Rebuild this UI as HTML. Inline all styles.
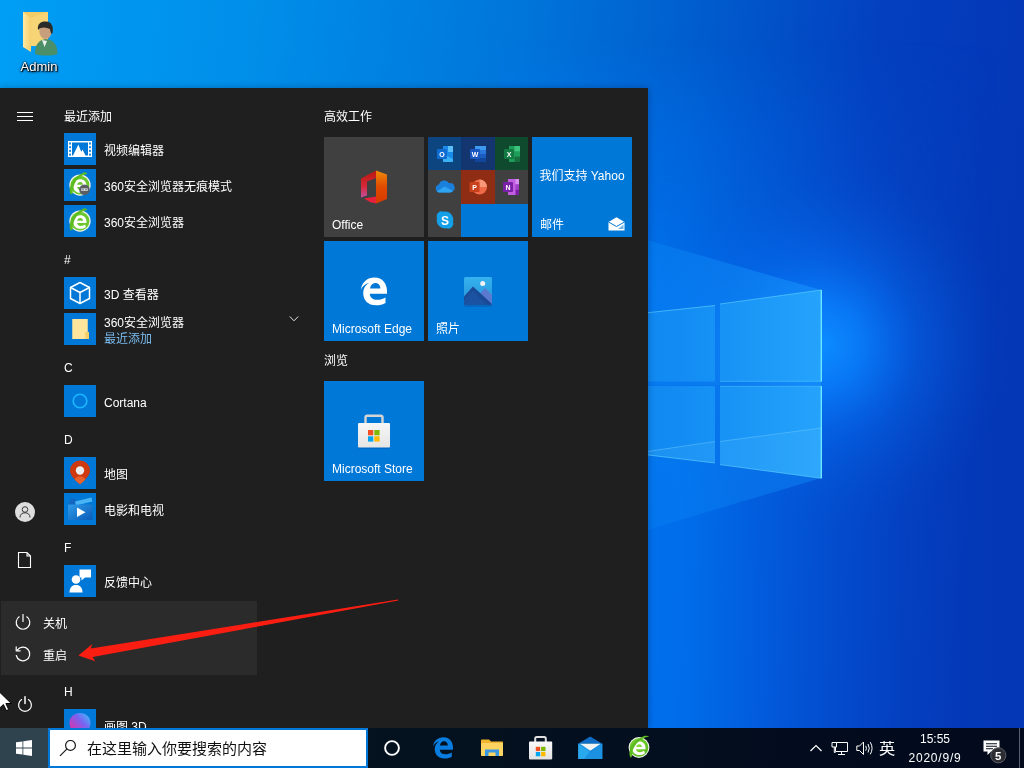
<!DOCTYPE html>
<html lang="zh-CN">
<head>
<meta charset="utf-8">
<title>Windows 10 开始菜单</title>
<style>
*{box-sizing:border-box;margin:0;padding:0}
html,body{width:1024px;height:768px;overflow:hidden;background:#0a5fd0}
body{position:relative;font-family:"Liberation Sans","Noto Sans CJK SC",sans-serif;font-size:12px;color:#fff;-webkit-font-smoothing:antialiased}
.abs{position:absolute}
#wall{position:absolute;left:0;top:0;width:1024px;height:768px}
/* desktop icon */
#dicon{position:absolute;left:0;top:0;width:76px;height:84px}
#dicon .lbl{position:absolute;left:1px;top:59px;width:76px;text-align:center;font-size:13px;line-height:16px;color:#fff;text-shadow:1px 1px 1px #000,0 0 2px #000,0 1px 3px rgba(0,0,0,.8)}
/* start menu */
#start{position:absolute;left:0;top:88px;width:648px;height:640px;background:#1f1f1f;overflow:hidden;box-shadow:0 0 7px rgba(0,10,40,.3)}
.hdr{position:absolute;left:64px;height:36px;line-height:38px;font-size:12px;color:#fff;white-space:nowrap}
.row{position:absolute;left:64px;height:36px;width:250px;white-space:nowrap}
.row .ic{position:absolute;left:0;top:0;width:32px;height:32px;background:#0078d7;overflow:hidden}
.row .ic svg{position:absolute;left:0;top:0;width:32px;height:32px;display:block}
.row .tx{position:absolute;left:40px;top:2px;height:32px;line-height:32px;font-size:12px;color:#fff}
.row .tx2{position:absolute;left:40px;top:2px;line-height:16px;font-size:12px;color:#fff}
.row .tx2 span{display:block;color:#79bbee}
/* tiles */
.ghdr{position:absolute;left:324px;font-size:12px;line-height:16px;color:#fff;white-space:nowrap}
.tile{position:absolute;width:100px;height:100px;background:#0078d7;overflow:hidden}
.tile .tl{position:absolute;left:8px;bottom:4px;font-size:12px;line-height:16px;color:#fff;white-space:nowrap}
.tile svg{position:absolute;display:block}
.cell{position:absolute;overflow:hidden}
/* power popup */
#pop{position:absolute;left:1px;top:601px;width:256px;height:74px;background:#2b2b2b}
#pop .it{position:absolute;left:0;width:256px;height:32px;line-height:32px;font-size:12px;color:#fff}
#pop .it span{position:absolute;left:42px;top:2px}
/* taskbar */
#task{position:absolute;left:0;top:728px;width:1024px;height:40px;background:linear-gradient(90deg,#05141f 0%,#04121f 40%,#030d1e 70%,#020a1c 100%)}
#sbtn{position:absolute;left:0;top:0;width:48px;height:40px;background:#2f434f}
#search{position:absolute;left:48px;top:0;width:320px;height:40px;background:#fff;border:2px solid #0078d7}
#search .st{position:absolute;left:37px;top:0;height:36px;line-height:37px;font-size:15px;color:#111;white-space:nowrap}
.tray{position:absolute;color:#fff;white-space:nowrap}
</style>
</head>
<body>
<div id="all" style="position:absolute;left:0;top:0;width:1024px;height:768px;will-change:transform">
<svg id="wall" viewBox="0 0 1024 768">
<defs>
<linearGradient id="wg" x1="0" y1="0" x2="1024" y2="120" gradientUnits="userSpaceOnUse">
<stop offset="0" stop-color="#009ef5"/>
<stop offset="0.25" stop-color="#008ee9"/>
<stop offset="0.5" stop-color="#0076da"/>
<stop offset="0.68" stop-color="#005ccd"/>
<stop offset="0.85" stop-color="#0340c0"/>
<stop offset="1" stop-color="#0437b6"/>
</linearGradient>
<linearGradient id="hl" x1="560" y1="0" x2="1000" y2="0" gradientUnits="userSpaceOnUse">
<stop offset="0" stop-color="#0078f4" stop-opacity=".95"/>
<stop offset=".3" stop-color="#0070ee" stop-opacity=".85"/>
<stop offset=".6" stop-color="#045ee2" stop-opacity=".5"/>
<stop offset=".8" stop-color="#0450d2" stop-opacity=".25"/>
<stop offset="1" stop-color="#0550c8" stop-opacity="0"/>
</linearGradient>
<linearGradient id="vm" x1="0" y1="40" x2="0" y2="300" gradientUnits="userSpaceOnUse">
<stop offset="0" stop-color="#000"/>
<stop offset=".35" stop-color="#777"/>
<stop offset="1" stop-color="#fff"/>
</linearGradient>
<mask id="vmask"><rect width="1024" height="768" fill="url(#vm)"/></mask>
<radialGradient id="glow" cx="822" cy="345" r="190" gradientUnits="userSpaceOnUse">
<stop offset="0" stop-color="#0c8cff" stop-opacity="1"/>
<stop offset=".22" stop-color="#0a82ff" stop-opacity=".8"/>
<stop offset=".5" stop-color="#0670f2" stop-opacity=".4"/>
<stop offset=".8" stop-color="#0560e0" stop-opacity=".12"/>
<stop offset="1" stop-color="#0550c8" stop-opacity="0"/>
</radialGradient>
<linearGradient id="beamU" x1="821" y1="290" x2="640" y2="240" gradientUnits="userSpaceOnUse">
<stop offset="0" stop-color="#1c9cff" stop-opacity=".5"/>
<stop offset="1" stop-color="#0c8cfa" stop-opacity=".3"/>
</linearGradient>
<linearGradient id="beamD" x1="821" y1="478" x2="640" y2="540" gradientUnits="userSpaceOnUse">
<stop offset="0" stop-color="#1494ff" stop-opacity=".4"/>
<stop offset="1" stop-color="#0a88f6" stop-opacity=".25"/>
</linearGradient>
<linearGradient id="pane" x1="720" y1="0" x2="821" y2="0" gradientUnits="userSpaceOnUse">
<stop offset="0" stop-color="#1792f5"/>
<stop offset="1" stop-color="#25a3fc"/>
</linearGradient>
<linearGradient id="paneL" x1="640" y1="0" x2="715" y2="0" gradientUnits="userSpaceOnUse">
<stop offset="0" stop-color="#0f88f1"/>
<stop offset="1" stop-color="#1691f5"/>
</linearGradient>
</defs>
<rect width="1024" height="768" fill="url(#wg)"/>
<rect x="500" y="0" width="524" height="768" fill="url(#hl)" mask="url(#vmask)"/>
<rect x="600" y="120" width="424" height="460" fill="url(#glow)"/>
<!-- light beams -->
<polygon points="821,290 640,238 640,385 821,385" fill="url(#beamU)"/>
<polygon points="821,478 640,532 640,385 821,385" fill="url(#beamD)"/>
<!-- window panes -->
<polygon points="640,313.500 715,305.500 715,381.500 640,381.500" fill="url(#paneL)"/>
<polygon points="720,304 821.500,290 821.500,381.500 720,381.500" fill="url(#pane)"/>
<polygon points="640,386 715,386 715,463 640,454" fill="url(#paneL)"/>
<polygon points="720,386 821.500,386 821.500,478.300 720,464.600" fill="url(#pane)"/>
<polygon points="720,441.500 821.500,428 821.500,478.300 720,464.600" fill="#6ccaff" opacity=".13"/>
<polygon points="640,452.600 715,441.500 715,463 640,454" fill="#6ccaff" opacity=".13"/>
<path d="M720,441.500L821.500,428M640,452.600L715,441.500" stroke="#7fd4ff" stroke-width=".8" opacity=".5" fill="none"/>
<path d="M720,304L821.500,290M720,464.600L821.500,478.300M640,313.500L715,305.500M640,454L715,463" stroke="#66d8ff" stroke-width=".9" opacity=".65" fill="none"/>
<path d="M821.300,290V381.500M821.300,386V478.300" stroke="#74f0ff" stroke-width="1.300" opacity=".95" fill="none"/>
<path d="M720,381.300H821.500M720,386.200H821.500" stroke="#58c8ff" stroke-width=".8" opacity=".6" fill="none"/>
</svg>
<div id="dicon">
<svg class="abs" style="left:20px;top:10px" width="40" height="46" viewBox="0 0 40 46">
<defs><linearGradient id="fo" x1="0" y1="0" x2="1" y2="0"><stop offset="0" stop-color="#ffe9a6"/><stop offset="1" stop-color="#f6cf6a"/></linearGradient></defs>
<polygon points="3,2 28,2 28,36 11,36 3,30" fill="#f4cc66"/>
<polygon points="3,2 11,8 11,42 3,37" fill="url(#fo)"/>
<polygon points="11,8 28,2 28,36 11,36" fill="#f7d577"/>
<path d="M15 44 C15 34 19 30 26 29 C33 30 37.500 34 37.500 44 C32 46 21 46 15 44Z" fill="#4a8f68"/>
<path d="M22 30 L24.500 37 L27 31Z" fill="#eef1ee"/>
<ellipse cx="25.500" cy="21.500" rx="6.200" ry="7.500" fill="#c79f7d"/>
<path d="M18 20 C17 13 22 11 26 11.500 C31 11.500 34 16 32.500 23 C31 25 30.500 22 30 19 C27 18 22 15.500 18 20Z" fill="#2a2a28"/>
</svg>
<div class="lbl">Admin</div>
</div>
<div id="start"><div id="si" class="abs" style="left:0;top:-88px;width:648px;height:728px">
<svg class="abs" style="left:0;top:88px" width="48" height="640" viewBox="0 88 48 640">
<g stroke="#fff" stroke-width="1" fill="none">
<path d="M17 112.500H33M17 116.500H33M17 120.500H33"/>
</g>
<circle cx="25" cy="512" r="10" fill="#dedede"/>
<g stroke="#3a3a3a" stroke-width="1" fill="none"><circle cx="25" cy="509.500" r="2.800"/><path d="M20 517.500C20 514 22.500 512.800 25 512.800S30 514 30 517.500"/></g>
<path d="M18.500 552.500H27L30.500 556V567.500H18.500ZM27 552.500V556H30.500" stroke="#fff" stroke-width="1.100" fill="none"/>
<g stroke="#fff" stroke-width="1.200" fill="none" stroke-linecap="round"><path d="M25 696.800V703.500" stroke-width="1.500"/><path d="M21.600 699.600A6.400 6.400 0 1 0 28.400 699.600"/></g>
</svg>
<div class="hdr" style="top:98px">最近添加</div>
<div class="row" style="top:133px"><div class="ic"><svg viewBox="0 0 32 32"><rect x="4" y="8" width="24" height="16" fill="#fff"/><path d="M8 9.500h16v13h-2.200l-3-6-1.600 2.300-2.800-7.300-5.400 11H8Z" fill="#0078d7"/><path d="M19 15.500l3 6.500" stroke="#0078d7" stroke-width="1.300"/><g fill="#0078d7"><rect x="5.200" y="9.500" width="1.700" height="2"/><rect x="5.200" y="13.200" width="1.700" height="2"/><rect x="5.200" y="16.900" width="1.700" height="2"/><rect x="5.200" y="20.600" width="1.700" height="2"/><rect x="25.100" y="9.500" width="1.700" height="2"/><rect x="25.100" y="13.200" width="1.700" height="2"/><rect x="25.100" y="16.900" width="1.700" height="2"/><rect x="25.100" y="20.600" width="1.700" height="2"/></g></svg></div><div class="tx">视频编辑器</div></div>
<div class="row" style="top:169px"><div class="ic"><svg viewBox="0 0 32 32"><use href="#i360"/><circle cx="20.500" cy="20.700" r="5.300" fill="#5a5f66"/><path d="M17.300 19.400h6.400v2.500h-6.400z" fill="#e8e8e8"/><circle cx="19" cy="20.700" r=".8" fill="#5a5f66"/><circle cx="22" cy="20.700" r=".8" fill="#5a5f66"/></svg></div><div class="tx">360安全浏览器无痕模式</div></div>
<div class="row" style="top:205px"><div class="ic"><svg viewBox="0 0 32 32"><g id="i360" transform="translate(-.2 -1.200) scale(1.045)"><circle cx="15.500" cy="16.500" r="10.200" fill="#f1f4ee"/><circle cx="15.500" cy="16.500" r="9" fill="#6cc82e"/><path d="M9.200 17.800c0-4.200 2.700-6.800 6.500-6.800 3.600 0 6 2.400 6 6.200v1.200h-9c.3 1.800 1.700 2.800 3.600 2.800 1.600 0 2.800-.5 4-1.400l1 2.300c-1.500 1.200-3.200 1.800-5.300 1.800-4.200 0-6.800-2.500-6.800-6.100Zm3.500-1.500h5.800c-.2-1.700-1.200-2.700-2.800-2.700-1.600 0-2.700 1-3 2.700Z" fill="#fff"/><path d="M6.500 25.500C4 20 7 10 19 4.500c1.500-.6 3 .5 3.500 1.500-8 1-14.500 9-14 18.500Z" fill="#5cbb20"/></g></svg></div><div class="tx">360安全浏览器</div></div>
<div class="hdr" style="top:241px">#</div>
<div class="row" style="top:277px"><div class="ic"><svg viewBox="0 0 32 32"><g stroke="#fff" stroke-width="1.500" fill="none" stroke-linejoin="round"><path d="M16 5.500L25.500 10.500V21.500L16 26.500L6.500 21.500V10.500Z"/><path d="M6.500 10.500L16 15.500L25.500 10.500M16 15.500V26.500"/></g></svg></div><div class="tx">3D 查看器</div></div>
<div class="row" style="top:313px"><div class="ic"><svg viewBox="0 0 32 32"><path d="M8.500 6h15v13l1.500 1.500V26H8.500Z" fill="#fbe08d"/><path d="M8.500 6h15v13h-3.500v7H8.500Z" fill="#fde69c"/><path d="M21.500 19h3.500v7h-3.500z" fill="#f3cd6a"/></svg></div><div class="tx2">360安全浏览器<span>最近添加</span></div><svg class="abs" style="left:225px;top:2px" width="10" height="8" viewBox="0 0 10 8"><path d="M.8 1.500l4.200 4.300 4.200-4.300" stroke="#e6e6e6" stroke-width="1" fill="none"/></svg></div>
<div class="hdr" style="top:349px">C</div>
<div class="row" style="top:385px"><div class="ic"><svg viewBox="0 0 32 32"><circle cx="16" cy="16" r="6.800" stroke="#1cb6ff" stroke-width="1.600" fill="none"/></svg></div><div class="tx">Cortana</div></div>
<div class="hdr" style="top:421px">D</div>
<div class="row" style="top:457px"><div class="ic"><svg viewBox="0 0 32 32"><path d="M16 27.500c-1.500-2.200-10-7.500-10-14a10 10 0 0 1 20 0c0 6.500-8.500 11.800-10 14Z" fill="#d0390f"/><path d="M10.500 22.500c1.500-2.300 3.300-3.300 5.500-3.300s4 1 5.500 3.300c-2 2.300-4.500 4-5.500 5-1-1-3.500-2.700-5.500-5Z" fill="#e8602c"/><circle cx="16" cy="13.500" r="4.200" fill="#ececec"/></svg></div><div class="tx">地图</div></div>
<div class="row" style="top:493px"><div class="ic"><svg viewBox="0 0 32 32"><defs><linearGradient id="mv" x1="0" y1="0" x2="1" y2="1"><stop offset="0" stop-color="#2f9be8"/><stop offset="1" stop-color="#0b5cb8"/></linearGradient></defs><path d="M4 12l3.500-7 5 1.500-2 5.500Z" fill="#1467c0"/><path d="M11 8.500L27.500 4.500l.8 4L12 12.500Z" fill="#49b4f4"/><rect x="4" y="11.500" width="24.500" height="15.500" rx="1" fill="url(#mv)"/><path d="M13 14.500v9.500l8.500-4.750Z" fill="#fff"/></svg></div><div class="tx">电影和电视</div></div>
<div class="hdr" style="top:529px">F</div>
<div class="row" style="top:565px"><div class="ic"><svg viewBox="0 0 32 32"><g fill="#fff"><path d="M15.500 4.500h11.500v8h-6l-3.500 3v-3h-2Z"/><circle cx="12" cy="14.500" r="4.300"/><path d="M5.500 27.500c0-5 2.500-7.500 6.500-7.500s6.500 2.500 6.500 7.500Z"/></g></svg></div><div class="tx">反馈中心</div></div>
<div class="hdr" style="top:673px">H</div>
<div class="row" style="top:709px"><div class="ic"><svg viewBox="0 0 32 32"><defs><linearGradient id="p3" x1="0" y1="1" x2="1" y2="0"><stop offset="0" stop-color="#f0287c"/><stop offset=".3" stop-color="#c040c0"/><stop offset=".6" stop-color="#7a62f0"/><stop offset="1" stop-color="#38c8ff"/></linearGradient></defs><path d="M16 4c6.500 0 10.500 4.500 10.500 10S22 25.500 16 27.500C10 25.500 5.500 19.500 5.500 14S9.500 4 16 4Z" fill="url(#p3)"/></svg></div><div class="tx">画图 3D</div></div>
<div class="ghdr" style="top:109px">高效工作</div>
<div class="tile" style="left:324px;top:137px;background:#404040">
<svg style="left:35px;top:32px" width="30" height="36" viewBox="0 0 30 36"><defs><linearGradient id="of1" x1="0" y1="0" x2="0" y2="1"><stop offset="0" stop-color="#b8160f"/><stop offset=".6" stop-color="#d8283a"/><stop offset="1" stop-color="#c050a0"/></linearGradient><linearGradient id="of2" x1="0" y1="0" x2="0" y2="1"><stop offset="0" stop-color="#f08a08"/><stop offset=".5" stop-color="#e04a00"/><stop offset="1" stop-color="#d83800"/></linearGradient></defs>
<path d="M2 9.500L17 1.500V9L8 12.500V26.500L2 28.500Z" fill="url(#of1)"/><path d="M17 1.500L28 5.500V30L17 34.500Z" fill="url(#of2)"/><path d="M5 29.500L17 27.500V34.500L11 33Z" fill="#e8203c"/></svg>
<div class="tl">Office</div></div>
<div class="tile" style="left:428px;top:137px;background:#404040">
<div class="cell" style="left:0;top:0;width:33px;height:33px;background:#0c4580"><svg style="left:7px;top:7px" width="20" height="20" viewBox="0 0 20 20"><rect x="8" y="2" width="10" height="13" fill="#1a8ae8"/><rect x="13" y="2" width="5" height="6" fill="#5cc0f8"/><path d="M8 10l10 5v3H8z" fill="#39b0f4"/><rect x="2" y="5" width="10" height="10" rx="1" fill="#0f6cd0"/><text x="7" y="13" font-size="7" font-weight="700" fill="#fff" text-anchor="middle" font-family="Liberation Sans,sans-serif">O</text></svg></div>
<div class="cell" style="left:33px;top:0;width:34px;height:33px;background:#143670"><svg style="left:7px;top:7px" width="20" height="20" viewBox="0 0 20 20"><rect x="7" y="2" width="11" height="4" fill="#3d9af0"/><rect x="7" y="6" width="11" height="4" fill="#2a78dc"/><rect x="7" y="10" width="11" height="4" fill="#1a5cc0"/><rect x="7" y="14" width="11" height="4" fill="#12459c"/><rect x="2" y="5" width="10" height="10" rx="1" fill="#1a56c0"/><text x="7" y="13" font-size="7" font-weight="700" fill="#fff" text-anchor="middle" font-family="Liberation Sans,sans-serif">W</text></svg></div>
<div class="cell" style="left:67px;top:0;width:33px;height:33px;background:#104a2e"><svg style="left:7px;top:7px" width="20" height="20" viewBox="0 0 20 20"><rect x="7" y="2" width="11" height="16" fill="#1f9e5a"/><rect x="12.500" y="2" width="5.500" height="5.300" fill="#3dc47c"/><rect x="12.500" y="12.600" width="5.500" height="5.400" fill="#176f40"/><rect x="2" y="5" width="10" height="10" rx="1" fill="#127a42"/><text x="7" y="13" font-size="7" font-weight="700" fill="#fff" text-anchor="middle" font-family="Liberation Sans,sans-serif">X</text></svg></div>
<div class="cell" style="left:0;top:33px;width:33px;height:34px"><svg style="left:6px;top:9px" width="22" height="16" viewBox="0 0 22 16"><path d="M5.500 13.500a4 4 0 0 1-.6-7.900 5.600 5.600 0 0 1 10.300-1.300 4.400 4.400 0 0 1 2.800 8.300c-.7.600-1.500.9-2.400.9Z" fill="#1a80dc"/><path d="M3 12.500l7.500-5 8.500 4.200c-.7 1.100-1.900 1.800-3.400 1.800h-10c-1 0-1.900-.4-2.600-1Z" fill="#2ea4f2"/></svg></div>
<div class="cell" style="left:33px;top:33px;width:34px;height:34px;background:#8e2c14"><svg style="left:7px;top:7px" width="20" height="20" viewBox="0 0 20 20"><circle cx="11.500" cy="10" r="7.500" fill="#ee6a48"/><path d="M11.500 2.500a7.500 7.500 0 0 1 7.500 7.500h-7.500z" fill="#f89878"/><rect x="1.500" y="5" width="10" height="10" rx="1" fill="#c8401c"/><text x="6.500" y="13" font-size="7" font-weight="700" fill="#fff" text-anchor="middle" font-family="Liberation Sans,sans-serif">P</text></svg></div>
<div class="cell" style="left:67px;top:33px;width:33px;height:34px"><svg style="left:6px;top:7px" width="20" height="20" viewBox="0 0 20 20"><rect x="7" y="2" width="11" height="16" fill="#c060e0"/><rect x="14.500" y="2" width="3.500" height="5.300" fill="#d890f0"/><rect x="14.500" y="7.300" width="3.500" height="5.300" fill="#a040c8"/><rect x="14.500" y="12.600" width="3.500" height="5.400" fill="#7a20a8"/><rect x="2" y="5" width="10" height="10" rx="1" fill="#7a1fa8"/><text x="7" y="13" font-size="7" font-weight="700" fill="#fff" text-anchor="middle" font-family="Liberation Sans,sans-serif">N</text></svg></div>
<div class="cell" style="left:0;top:67px;width:33px;height:33px"><svg style="left:7px;top:6px" width="20" height="20" viewBox="0 0 20 20"><path d="M10 1.500a8.300 8.300 0 0 1 8 10.500 5 5 0 0 1-6.500 6.300A8.300 8.300 0 0 1 2 8 5 5 0 0 1 8.500 1.700 8 8 0 0 1 10 1.500Z" fill="#14a0e8"/><text x="10" y="14.500" font-size="12" font-weight="700" fill="#fff" text-anchor="middle" font-family="Liberation Sans,sans-serif">S</text></svg></div>
<div class="cell" style="left:33px;top:67px;width:67px;height:33px;background:#0078d7"></div>
</div>
<div class="tile" style="left:532px;top:137px">
<div class="abs" style="left:0;top:31px;width:100px;text-align:center;font-size:12px;line-height:16px;white-space:nowrap">我们支持 Yahoo</div>
<div class="tl">邮件</div>
<svg style="left:76px;top:80px" width="17" height="14" viewBox="0 0 17 14"><path d="M.5 5L8.500.3 16.500 5V13.500H.5Z" fill="#fff"/><path d="M.5 5l8 4.500 8-4.500" stroke="#0078d7" stroke-width="1" fill="none"/><path d="M10 12l5.500-4.500V12Z" fill="#0078d7" opacity=".55"/></svg>
</div>
<div class="tile" style="left:324px;top:241px">
<svg style="left:36px;top:35px" width="28" height="30" viewBox="0 0 28 30"><path d="M1 13.500C1.800 6 7.500 1.500 14.500 1.500 22.500 1.500 27 7.500 27 15v2.800H9.800c.3 4 3.300 6 7.200 6 3.200 0 6-.9 8.500-2.400v5.600C23 28.500 19.800 29.300 16 29.300 8 29.300 3.200 24.300 3.200 17c0-4.500 2.200-8 5.800-10.200C5.500 7.800 2.600 10 1 13.500Zm9-1h10.300c0-3.300-2-5.500-5-5.500-2.800 0-4.800 2.100-5.300 5.500Z" fill="#fff"/></svg>
<div class="tl">Microsoft Edge</div></div>
<div class="tile" style="left:428px;top:241px">
<svg style="left:35px;top:35px" width="30" height="31" viewBox="0 0 30 31"><defs><linearGradient id="ph" x1="0" y1="0" x2="0" y2="1"><stop offset="0" stop-color="#35b2ee"/><stop offset="1" stop-color="#2590d8"/></linearGradient></defs><rect x="1" y="2" width="28" height="29" rx="1.500" fill="#0a4a98" opacity=".35"/><rect x="1" y="1" width="28" height="28" rx="1.500" fill="url(#ph)"/><path d="M15 20l7-8 7 7v8.500c0 .8-.7 1.500-1.500 1.500H15Z" fill="#5a7ad0"/><path d="M1 20.500L10 10.500 29 28c-.3.600-.8 1-1.500 1H2.500C1.700 29 1 28.300 1 27.500Z" fill="#1a4a96"/><path d="M1 24l9-9 14 14H2.500C1.700 29 1 28.300 1 27.500Z" fill="#1c58a8" opacity=".6"/><circle cx="19.700" cy="7.500" r="2.500" fill="#f2f2f2"/></svg>
<div class="tl">照片</div></div>
<div class="ghdr" style="top:353px">浏览</div>
<div class="tile" style="left:324px;top:381px">
<svg style="left:32px;top:32px" width="36" height="38" viewBox="0 0 36 38"><defs><linearGradient id="bag" x1="0" y1="0" x2="0" y2="1"><stop offset="0" stop-color="#f7f7f7"/><stop offset="1" stop-color="#e4e4e4"/></linearGradient></defs><rect x="2.500" y="11" width="31" height="25" rx="1" fill="#0a4a98" opacity=".3"/><path d="M9.500 13V4.500c0-1 .8-1.800 1.800-1.800h13.400c1 0 1.800.8 1.800 1.800V13" stroke="#d4d4d4" stroke-width="2.400" fill="none"/><rect x="2" y="10" width="32" height="24.500" rx="1" fill="url(#bag)"/><rect x="12" y="17" width="5.300" height="5.300" fill="#f25022"/><rect x="18.300" y="17" width="5.300" height="5.300" fill="#7fba00"/><rect x="12" y="23.300" width="5.300" height="5.300" fill="#00a4ef"/><rect x="18.300" y="23.300" width="5.300" height="5.300" fill="#ffb900"/></svg>
<div class="tl">Microsoft Store</div></div>
</div></div>
<div id="pop">
<div class="it" style="top:5px"><svg class="abs" style="left:13px;top:7px" width="18" height="18" viewBox="0 0 18 18"><g stroke="#fff" stroke-width="1.200" fill="none" stroke-linecap="round"><path d="M9 1.500V8.500"/><path d="M5.200 3.800A6.800 6.800 0 1 0 12.800 3.800"/></g></svg><span>关机</span></div>
<div class="it" style="top:37px"><svg class="abs" style="left:13px;top:7px" width="18" height="18" viewBox="0 0 18 18"><g stroke="#fff" stroke-width="1.200" fill="none" stroke-linecap="round"><path d="M3.300 5.200A6.800 6.800 0 1 1 2.300 10.500"/><path d="M2.200 1.800V5.800H6.200" stroke-linejoin="round"/></g></svg><span>重启</span></div>
</div>
<svg class="abs" style="left:70px;top:590px" width="340" height="80" viewBox="70 590 340 80"><polygon points="78.400,655.500 92.300,644 90.800,648.600 398,599.400 398.300,600.600 92.600,657 95.200,661.300" fill="#fa1e12"/></svg>
<div id="task">
<div id="sbtn"><svg class="abs" style="left:16px;top:12px" width="16" height="16" viewBox="0 0 16 16"><path d="M0 2.300L6.500 1.400V7.600H0ZM7.300 1.300L16 0V7.600H7.300ZM0 8.400H6.500V14.600L0 13.700ZM7.300 8.400H16V16L7.300 14.700Z" fill="#fff"/></svg></div>
<div id="search"><svg class="abs" style="left:9px;top:10px" width="18" height="17" viewBox="0 0 18 17"><g stroke="#1a1a1a" stroke-width="1.200" fill="none"><circle cx="11.500" cy="5.400" r="4.900"/><path d="M8 8.900L1 15.900"/></g></svg><div class="st">在这里输入你要搜索的内容</div></div>
<!-- cortana -->
<svg class="abs" style="left:382px;top:10px" width="20" height="20" viewBox="0 0 20 20"><circle cx="10" cy="10" r="6.900" stroke="#fff" stroke-width="1.900" fill="none"/></svg>
<!-- edge -->
<svg class="abs" style="left:432px;top:8px" width="22" height="23" viewBox="0 0 28 30"><path d="M1 13.500C1.800 6 7.500 1.500 14.500 1.500 22.500 1.500 27 7.500 27 15v2.800H9.800c.3 4 3.300 6 7.200 6 3.200 0 6-.9 8.500-2.400v5.600C23 28.500 19.800 29.300 16 29.300 8 29.300 3.200 24.300 3.200 17c0-4.500 2.200-8 5.800-10.200C5.500 7.800 2.600 10 1 13.500Zm9-1h10.300c0-3.300-2-5.500-5-5.500-2.800 0-4.800 2.100-5.300 5.500Z" fill="#0a7ee0"/></svg>
<!-- explorer -->
<svg class="abs" style="left:480px;top:10px" width="24" height="20" viewBox="0 0 24 20"><path d="M1 2.500c0-.6.400-1 1-1h7l2 2h11c.6 0 1 .4 1 1V17H1Z" fill="#f0b630"/><rect x="1" y="5" width="22" height="13" rx=".8" fill="#fcd462"/><path d="M5 11.500h14V18H5Z" fill="#3a96e0"/><path d="M8.500 14.500h7V18h-7Z" fill="#fcd462"/></svg>
<!-- store mail 360 -->
<svg class="abs" style="left:520px;top:0" width="140" height="40" viewBox="520 728 140 40">
<defs><linearGradient id="tbag" x1="0" y1="0" x2="0" y2="1"><stop offset="0" stop-color="#fafafa"/><stop offset="1" stop-color="#e2e2e2"/></linearGradient>
<radialGradient id="g360" cx=".45" cy=".4" r=".6"><stop offset="0" stop-color="#8ee03c"/><stop offset="1" stop-color="#58b81c"/></radialGradient></defs>
<path d="M535.200 742.500V738.600c0-.9.700-1.600 1.600-1.600h7.400c.9 0 1.600.7 1.600 1.600V742.500" stroke="#e0e0e0" stroke-width="2" fill="none"/>
<rect x="529" y="741.600" width="23.200" height="17.800" rx=".8" fill="url(#tbag)"/>
<rect x="535.800" y="746.800" width="4.400" height="4.300" fill="#f25022"/><rect x="541.100" y="746.800" width="4.400" height="4.300" fill="#7fba00"/><rect x="535.800" y="752" width="4.400" height="4.300" fill="#00a4ef"/><rect x="541.100" y="752" width="4.400" height="4.300" fill="#ffb900"/>
<path d="M578.100 743.700L590.200 736.600 602.300 743.700Z" fill="#0f6cc4"/>
<rect x="578.100" y="743.700" width="24.200" height="15.300" fill="#2aa8ee"/>
<path d="M580.200 743.700H600.400L590.400 750.800Z" fill="#f0f2f4"/>
<path d="M590.400 750.800L602.300 743.900V759H584Z" fill="#1888dc" opacity=".75"/>
<path d="M578.100 743.700L590.400 751.800 602.300 743.700" stroke="#1579d0" stroke-width=".8" fill="none" opacity=".6"/>
<circle cx="639" cy="747.500" r="10.400" fill="#eef2ea"/><circle cx="639" cy="747.500" r="9.300" fill="url(#g360)"/>
<path d="M632.300 748.600c0-4.300 2.900-7.100 6.900-7.100 3.800 0 6.300 2.500 6.300 6.500v1.300h-9.500c.3 1.900 1.800 2.900 3.800 2.900 1.700 0 2.900-.5 4.200-1.400l1.100 2.400c-1.600 1.300-3.400 1.900-5.600 1.900-4.400 0-7.200-2.600-7.200-6.500Zm3.800-1.500h6c-.2-1.800-1.300-2.900-3-2.900-1.600 0-2.700 1.100-3 2.900Z" fill="#fff"/>
<path d="M630.500 757.800C627.500 752 630.500 741.500 643.500 736.200c2-.8 4.500-.6 5.700.3-9 1.200-17.700 9.700-17.200 19.800Z" fill="#5cbb20"/>
</svg>
<!-- tray -->
<svg class="abs" style="left:809px;top:15px" width="14" height="10" viewBox="0 0 14 10"><path d="M1.500 8L7 2.500 12.500 8" stroke="#fff" stroke-width="1.200" fill="none"/></svg>
<svg class="abs" style="left:831px;top:13px" width="18" height="15" viewBox="0 0 18 15"><g stroke="#fff" stroke-width="1" fill="none"><path d="M4.500 1.500H16.500V10.500H4.500Z"/><path d="M10.500 10.500V13.500M7 13.500H14"/><path d="M1 1.500H5.500V6H1Z" fill="#06121e"/><path d="M3.300 6V11.500H4.500"/></g></svg>
<svg class="abs" style="left:856px;top:12px" width="18" height="17" viewBox="0 0 18 17"><g stroke="#fff" stroke-width="1" fill="none"><path d="M.8 6H3.500L7.500 2V14.500L3.500 10.500H.8Z"/><path d="M9.700 5.800Q11.200 8.250 9.700 10.700M12 4Q14.500 8.250 12 12.500M14.300 2.200Q17.800 8.250 14.300 14.300"/></g></svg>
<div class="tray" style="left:879px;top:12px;font-size:15px;line-height:18px;transform:scaleX(1.08);transform-origin:0 0">英</div>
<div class="tray" style="left:905px;top:3px;width:60px;text-align:center;font-size:12px;line-height:16px">15:55</div>
<div class="tray" style="left:904px;top:22px;width:62px;text-align:center;font-size:12px;line-height:16px;letter-spacing:.8px">2020/9/9</div>
<svg class="abs" style="left:982px;top:11px" width="28" height="28" viewBox="0 0 28 28"><path d="M1.500 1.500H17.500V12.500H9L5.500 16V12.500H1.500Z" fill="#fff"/><path d="M4 4.700H15M4 7.200H15M4 9.700H11" stroke="#06121e" stroke-width="1.100"/><circle cx="16.300" cy="16.300" r="7.600" fill="#2b2d32" stroke="#5a5d63" stroke-width="1"/><text x="16.300" y="20.500" font-size="11.500" font-weight="700" fill="#fff" text-anchor="middle" font-family="Liberation Sans,sans-serif">5</text></svg>
<div class="abs" style="left:1019px;top:0;width:1px;height:40px;background:#56616b"></div>
</div>
<svg class="abs" style="left:-1px;top:691px" width="14" height="22" viewBox="0 0 14 22"><path d="M.5 1V17.200L4.400 13.500 7.300 19.600 9.700 18.500 6.900 12.500H12.300Z" fill="#fff" stroke="#000" stroke-width="1"/></svg>
</div>
</body>
</html>
